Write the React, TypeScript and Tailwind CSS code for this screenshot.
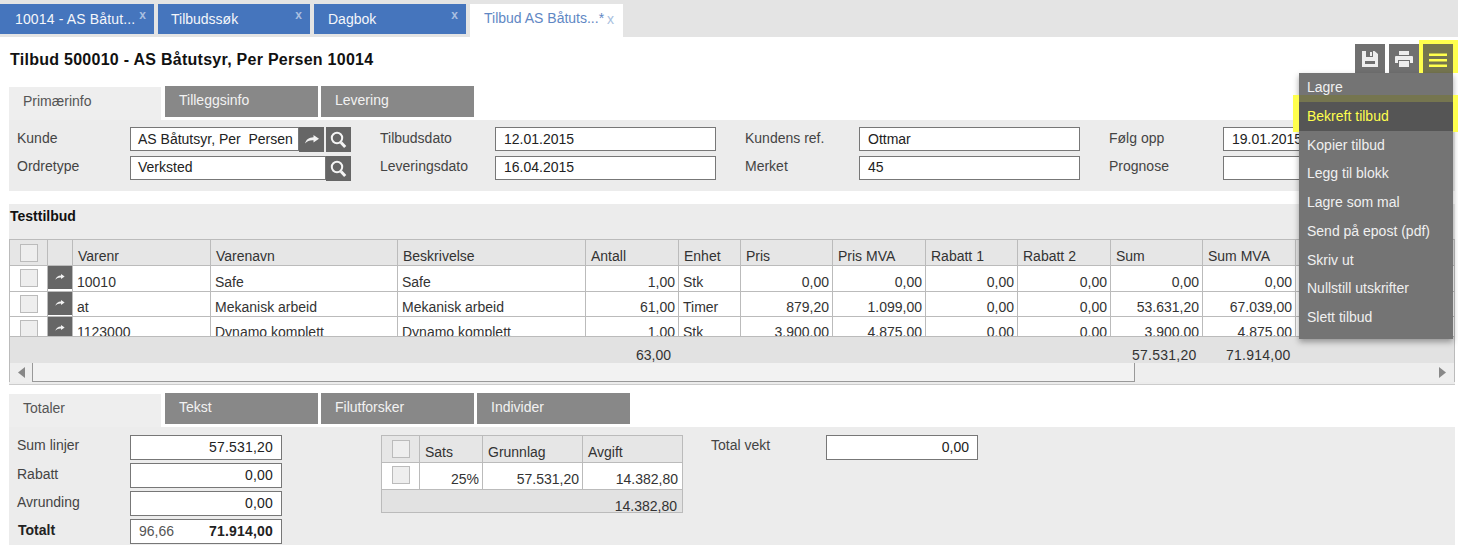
const topTabs = [
  { label: '10014 - AS Båtut...', box: 'w-[154px] pl-[15px] tracking-[0.15px]' },
  { label: 'Tilbudssøk', box: 'w-[152px] pl-[13px]' },
  { label: 'Dagbok', box: 'w-[152px] pl-[14px]' },
]

const menuItems = [
  'Lagre',
  'Bekreft tilbud',
  'Kopier tilbud',
  'Legg til blokk',
  'Lagre som mal',
  'Send på epost (pdf)',
  'Skriv ut',
  'Nullstill utskrifter',
  'Slett tilbud',
]

const columns = ['Varenr', 'Varenavn', 'Beskrivelse', 'Antall', 'Enhet', 'Pris', 'Pris MVA', 'Rabatt 1', 'Rabatt 2', 'Sum', 'Sum MVA', '']

const rows = [
  ['10010', 'Safe', 'Safe', '1,00', 'Stk', '0,00', '0,00', '0,00', '0,00', '0,00', '0,00', ''],
  ['at', 'Mekanisk arbeid', 'Mekanisk arbeid', '61,00', 'Timer', '879,20', '1.099,00', '0,00', '0,00', '53.631,20', '67.039,00', ''],
  ['1123000', 'Dynamo komplett', 'Dynamo komplett', '1,00', 'Stk', '3.900,00', '4.875,00', '0,00', '0,00', '3.900,00', '4.875,00', ''],
]

const gridCols = 'grid grid-cols-[38px_25px_138px_187px_188px_93px_62px_92px_93px_92px_93px_92px_93px_1fr]'

function SaveIcon() {
  return (
    <svg width="18" height="18" viewBox="0 0 18 18" fill="#eeeeee">
      <path fillRule="evenodd" d="M1 1h12.5L17 4v13H1zM5 1v6h7V1zM4 11v3h10v-3z" />
      <rect x="9" y="2" width="2" height="4" />
    </svg>
  )
}

function PrintIcon() {
  return (
    <svg width="20" height="18" viewBox="0 0 20 18" fill="#eeeeee">
      <rect x="5" y="1" width="10" height="4" />
      <path d="M1 7q0-1 1-1h16q1 0 1 1v6h-3v-3H4v3H1z" />
      <rect x="5" y="11" width="10" height="6" />
    </svg>
  )
}

function ArrowIcon({ small }: { small?: boolean }) {
  return (
    <svg width={small ? 10 : 14} height={small ? 6 : 9} viewBox="0 0 14 9" fill="#f2f2f2">
      <path d="M8.5 0L14 3.8 8.5 7.5V5.3C5 5 2.500 6 0 8.500 1 4.500 4 2.300 8.500 2.200z" />
    </svg>
  )
}

function SearchIcon() {
  return (
    <svg width="17" height="18" viewBox="0 0 17 18" fill="none" stroke="#f5f5f5">
      <circle cx="7" cy="7" r="5.200" strokeWidth="2" />
      <path d="M11 11.500L15.200 16" strokeWidth="3" />
    </svg>
  )
}

function Checkbox() {
  return <div className="h-[18px] w-[18px] border border-[#bbbbbb] bg-[#eeeeee]" />
}

function SubTab({ label, active }: { label: string; active?: boolean }) {
  if (active) {
    return <div className="h-[33px] w-[152px] bg-[#eeeeee] pl-[14px] pt-[4px] text-[#555555]">{label}</div>
  }
  return <div className="mb-[3px] h-[31px] w-[153px] bg-[#888888] pl-[14px] pt-[4px] text-[#f2f2f2]">{label}</div>
}

function Field({ label, value, second, labelWidth = 'w-[114px]' }: { label: string; value: string; second?: boolean; labelWidth?: string }) {
  return (
    <div className="flex h-[24px] items-start">
      <div className={`${labelWidth} ${second ? '' : 'mt-px'} text-[#444444]`}>{label}</div>
      <div className={`h-[24px] w-[221px] border border-[#777777] bg-white pl-[8px] ${second ? 'pt-0' : 'pt-px'} text-[#222222]`}>{value}</div>
    </div>
  )
}

function IconButton({ children }: { children: React.ReactNode }) {
  return <div className="flex h-[25px] w-[25px] shrink-0 items-center justify-center bg-[#666666]">{children}</div>
}

function AmountField({ label, value, bold, labelTop = 'mt-px' }: { label: string; value: string; bold?: boolean; labelTop?: string }) {
  return (
    <div className="flex h-[25px] items-start">
      <div className={`w-[113px] ${labelTop} ${bold ? 'pl-px font-bold text-[#222222]' : 'text-[#444444]'}`}>{label}</div>
      <div className="flex h-[25px] w-[152px] justify-between border border-[#777777] bg-white px-[8px] pt-px text-[#222222]">
        <span className="text-[#555555]">{bold ? '96,66' : ''}</span>
        <span className={`tracking-[0.2px] ${bold ? 'font-bold' : ''}`}>{value}</span>
      </div>
    </div>
  )
}

export default function App() {
  return (
    <div className="relative h-[545px] w-[1458px] overflow-hidden bg-white font-['Liberation_Sans',Arial,sans-serif] text-[14px] leading-[20px]">
      {/* top tabs */}
      <div className="flex h-[37px] bg-[#e4e4e4] pt-[4px]">
        <div className="flex gap-[4px]">
          {topTabs.map((tab) => (
            <div key={tab.label} className={`${tab.box} relative h-[30px] bg-[#4575bd] pt-[5px] text-[#f4f6fa]`}>
              {tab.label}
              <span className="absolute right-[8px] top-[1px] text-[12px] font-bold text-[#a9bfe0]">x</span>
            </div>
          ))}
          <div className="relative h-[33px] w-[153px] bg-white pl-[14px] pt-[4px] text-[#5f87c4]">
            Tilbud AS Båtuts...*
            <span className="absolute right-[9px] top-[5px] text-[#a9bfe0]">x</span>
          </div>
        </div>
      </div>

      {/* title and actions */}
      <div className="flex h-[49px] items-center justify-between pl-[10px] pr-[5px]">
        <h1 className="mt-[-3px] text-[16px] font-bold tracking-[0.27px] text-[#111111]">Tilbud 500010 - AS Båtutsyr, Per Persen 10014</h1>
        <div className="mt-[-5px] flex gap-[4px]">
          <div className="flex h-[30px] w-[30px] items-center justify-center bg-[#707070]">
            <SaveIcon />
          </div>
          <div className="flex h-[30px] w-[30px] items-center justify-center bg-[#707070]">
            <PrintIcon />
          </div>
          <div className="flex h-[30px] w-[30px] items-center justify-center bg-[#75754f] pt-[2px]">
            <svg width="18" height="14" viewBox="0 0 18 14" fill="#ffff4d">
              <rect y="0.500" width="18" height="2.500" />
              <rect y="6" width="18" height="2.500" />
              <rect y="11.500" width="18" height="2.500" />
            </svg>
          </div>
        </div>
      </div>

      {/* info section */}
      <div className="px-[9px] pr-[3px]">
        <div className="flex h-[34px] items-end gap-[4px]">
          <SubTab label="Primærinfo" active />
          <SubTab label="Tilleggsinfo" />
          <div className="-ml-[1px]">
            <SubTab label="Levering" />
          </div>
        </div>
        <div className="flex h-[71px] gap-[29px] bg-[#ececec] pl-[8px] pt-[7px]">
          <div className="-mr-px flex w-[335px] flex-col gap-[5px]">
            <div className="flex h-[24px] items-start">
              <div className="mt-px w-[113px] text-[#444444]">Kunde</div>
              <div className="h-[24px] w-[169px] border border-[#777777] bg-white pl-[7px] pt-px text-[#222222]">AS Båtutsyr, Per&nbsp; Persen</div>
              <IconButton>
                <ArrowIcon />
              </IconButton>
              <div className="ml-[2px]">
                <IconButton>
                  <SearchIcon />
                </IconButton>
              </div>
            </div>
            <div className="flex h-[24px] items-start">
              <div className="w-[113px] text-[#444444]">Ordretype</div>
              <div className="h-[24px] w-[196px] border border-[#777777] bg-white pl-[7px] text-[#222222]">Verksted</div>
              <IconButton>
                <SearchIcon />
              </IconButton>
            </div>
          </div>
          <div className="flex flex-col gap-[5px]">
            <Field label="Tilbudsdato" value="12.01.2015" labelWidth="w-[115px]" />
            <Field label="Leveringsdato" value="16.04.2015" labelWidth="w-[115px]" second />
          </div>
          <div className="flex flex-col gap-[5px]">
            <Field label="Kundens ref." value="Ottmar" />
            <Field label="Merket" value="45" second />
          </div>
          <div className="flex flex-col gap-[5px]">
            <Field label="Følg opp" value="19.01.2015" />
            <Field label="Prognose" value="" second />
          </div>
        </div>

        {/* lines table */}
        <div className="mt-[13px] h-[181px] border-b border-[#cccccc] bg-[#ececec]">
          <div className="h-[35px] pl-px pt-[2px] font-bold text-[#111111]">Testtilbud</div>
          <div className="border-x border-t border-[#bbbbbb] text-[#333333]">
            <div className={`${gridCols} h-[26px] border-b border-[#bbbbbb] bg-[#e6e6e6]`}>
              <div className="flex items-center justify-center border-r border-[#bbbbbb]">
                <Checkbox />
              </div>
              <div className="border-r border-[#bbbbbb]" />
              {columns.map((col) => (
                <div key={col} className="border-r border-[#bbbbbb] pl-[5px] pt-[6px] last:border-r-0">{col}</div>
              ))}
            </div>
            <div className="h-[70px] overflow-hidden bg-white">
              {rows.map((row, i) => (
                <div key={row[0]} className={`${gridCols} ${i === 0 ? 'h-[26px]' : 'h-[25px]'} border-b border-[#bbbbbb]`}>
                  <div className="flex justify-center border-r border-[#bbbbbb] pt-[3px]">
                    <Checkbox />
                  </div>
                  <div className="border-r border-[#bbbbbb]">
                    <div className="flex h-[23px] w-[24px] justify-center bg-[#666666] pt-[8px]">
                      <ArrowIcon small />
                    </div>
                  </div>
                  {row.map((cell, j) => (
                    <div
                      key={j}
                      className={`border-r border-[#bbbbbb] last:border-r-0 ${i === 0 ? 'pt-[6px]' : 'pt-[5px]'} ${j === 3 || (j >= 5 && j <= 10) ? 'pr-[3px] text-right' : 'pl-[4px]'}`}
                    >
                      {cell}
                    </div>
                  ))}
                </div>
              ))}
            </div>
            <div className="relative h-[27px] border-t border-[#bbbbbb] bg-[#e2e2e2]">
              <span className="absolute left-[626px] top-[8px]">63,00</span>
              <span className="absolute left-[1122px] top-[8px] tracking-[0.25px]">57.531,20</span>
              <span className="absolute left-[1216px] top-[8px] tracking-[0.25px]">71.914,00</span>
            </div>
            <div className="flex h-[19px] bg-[#eeeeee]">
              <div className="flex w-[22px] items-center justify-center pb-[1px]">
                <svg width="7" height="11" viewBox="0 0 7 11" fill="#888888"><path d="M7 0v11L0 5.500z" /></svg>
              </div>
              <div className="h-[19px] w-[1103px] border-b border-l border-r border-[#999999] bg-[#f2f2f2]" />
              <div className="flex flex-1 items-center justify-end pb-[1px] pr-[8px]">
                <svg width="7" height="11" viewBox="0 0 7 11" fill="#888888"><path d="M0 0v11l7-5.500z" /></svg>
              </div>
            </div>
          </div>
        </div>

        {/* totals section */}
        <div className="mt-[8px] flex h-[34px] items-end gap-[4px]">
          <SubTab label="Totaler" active />
          <SubTab label="Tekst" />
          <div className="-ml-[1px]">
            <SubTab label="Filutforsker" />
          </div>
          <div className="-ml-[1px]">
            <SubTab label="Individer" />
          </div>
        </div>
        <div className="flex h-[118px] bg-[#ececec] pl-[8px] pt-[8px]">
          <div className="flex w-[364px] flex-col gap-[3px]">
            <AmountField label="Sum linjer" value="57.531,20" labelTop="mt-0" />
            <AmountField label="Rabatt" value="0,00" />
            <AmountField label="Avrunding" value="0,00" />
            <AmountField label="Totalt" value="71.914,00" bold />
          </div>
          <div className="h-[78px] w-[302px] border border-[#bbbbbb] text-[#333333]">
            <div className="grid h-[27px] grid-cols-[38px_63px_100px_1fr] border-b border-[#bbbbbb] bg-[#e6e6e6]">
              <div className="flex items-center justify-center border-r border-[#bbbbbb]">
                <Checkbox />
              </div>
              <div className="border-r border-[#bbbbbb] pl-[5px] pt-[6px]">Sats</div>
              <div className="border-r border-[#bbbbbb] pl-[5px] pt-[6px]">Grunnlag</div>
              <div className="pl-[5px] pt-[6px]">Avgift</div>
            </div>
            <div className="grid h-[27px] grid-cols-[38px_63px_100px_1fr] border-b border-[#bbbbbb] bg-white">
              <div className="flex justify-center border-r border-[#bbbbbb] pt-[3px]">
                <Checkbox />
              </div>
              <div className="border-r border-[#bbbbbb] pr-[3px] pt-[6px] text-right">25%</div>
              <div className="border-r border-[#bbbbbb] pr-[3px] pt-[6px] text-right">57.531,20</div>
              <div className="pr-[4px] pt-[6px] text-right">14.382,80</div>
            </div>
            <div className="h-[22px] bg-[#e2e2e2] pr-[5px] pt-[6px] text-right">14.382,80</div>
          </div>
          <div className="ml-[28px] flex h-[25px] items-start">
            <div className="w-[115px] text-[#444444]">Total vekt</div>
            <div className="h-[25px] w-[152px] border border-[#777777] bg-white pr-[8px] pt-px text-right text-[#222222]">0,00</div>
          </div>
        </div>
      </div>

      {/* dropdown menu */}
      <div className="absolute left-[1299px] top-[73px] w-[154px] bg-[#747474] pb-[7px] shadow-[0_3px_6px_rgba(0,0,0,0.35)]">
        {menuItems.map((item) => (
          <div
            key={item}
            className={`h-[28.75px] pl-[8px] pt-[4px] ${item === 'Bekreft tilbud' ? 'bg-[#555555] text-[#ffff4d]' : 'text-[#f0f0f0]'}`}
          >
            {item}
          </div>
        ))}
      </div>

      {/* yellow highlight marks */}
      <div className="absolute left-[1419px] top-[40px] h-[33px] w-[39px] border-[4px] border-b-0 border-r-[5px] border-[#ffff4d]" />
      <div className="absolute left-[1293px] top-[95px] h-[37px] w-[6px] bg-[#ffff4d]" />
      <div className="absolute left-[1453px] top-[95px] h-[37px] w-[5px] bg-[#ffff4d]" />
      <div className="absolute left-[1299px] top-[95px] h-[7px] w-[154px] bg-[#75754f]" />
    </div>
  )
}
